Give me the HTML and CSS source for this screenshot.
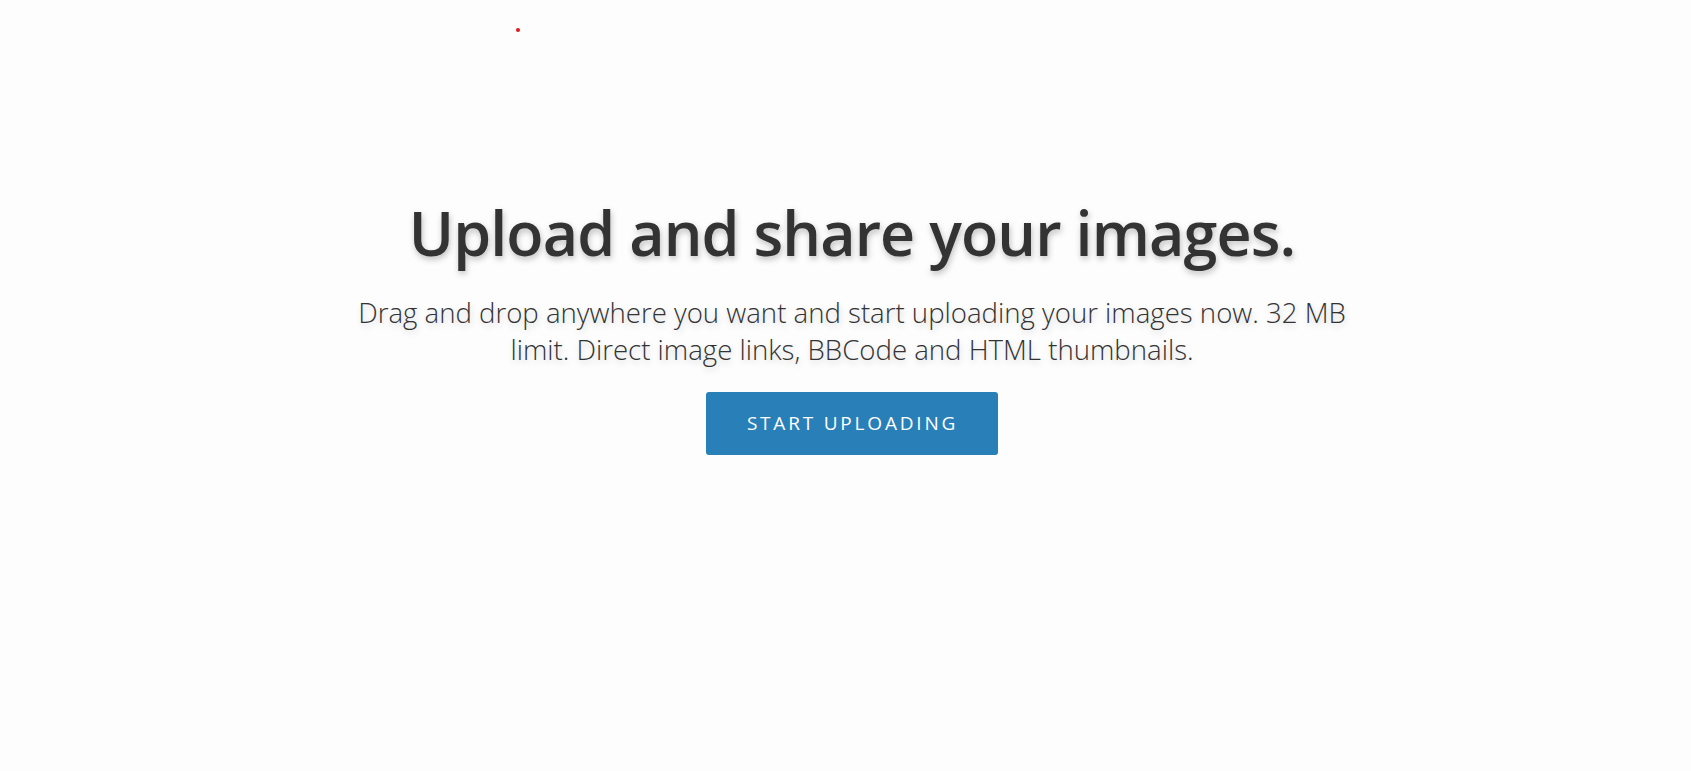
FILE: index.html
```html
<!DOCTYPE html>
<html lang="en">
<head>
<meta charset="utf-8">
<title>Upload and share your images</title>
<link rel="stylesheet" href="styles.css">
</head>
<body>
<span class="dot"></span>
<main class="hero">
  <h1 class="hero-title">Upload and share your images.</h1>
  <p class="hero-text">Drag and drop anywhere you want and start uploading your images now. 32 MB limit. Direct image links, BBCode and HTML thumbnails.</p>
  <a class="btn" href="#">Start uploading</a>
</main>
</body>
</html>
```
FILE: styles.css
```css
html, body {
  margin: 0;
  padding: 0;
  background: #fdfdfd;
  height: 100%;
}
body {
  font-family: "Open Sans", "Noto Sans", sans-serif;
  color: #333;
}
.dot {
  position: absolute;
  left: 516px;
  top: 28px;
  width: 4px;
  height: 4px;
  border-radius: 50%;
  background: #e3171b;
}
.hero {
  display: flex;
  flex-direction: column;
  align-items: center;
  text-align: center;
  padding-top: 195px;
  padding-left: 13px;
}
.hero-title {
  margin: 0;
  font-size: 61px;
  font-weight: 600;
  letter-spacing: -0.9px;
  line-height: 76px;
  color: #333;
  text-shadow: 1px 3px 6px rgba(0,0,0,0.25);
}
.hero-text {
  margin: 23px 0 0;
  width: 1010px;
  font-size: 27.6px;
  font-weight: 300;
  line-height: 37px;
  color: #333;
  text-shadow: 1px 3px 6px rgba(0,0,0,0.18);
}
.btn {
  margin-top: 24px;
  display: inline-block;
  background: #2980b9;
  color: #fff;
  text-decoration: none;
  text-transform: uppercase;
  font-size: 19px;
  font-weight: 400;
  letter-spacing: 2.8px;
  line-height: 63px;
  height: 63px;
  padding: 0 40px 0 41px;
  border-radius: 3px;
}
```
